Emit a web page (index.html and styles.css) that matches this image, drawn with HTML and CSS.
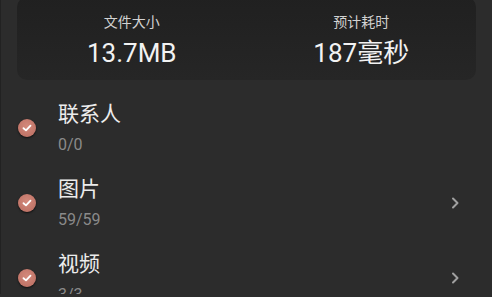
FILE: index.html
```html
<!DOCTYPE html>
<html lang="zh-CN">
<head>
    <meta charset="UTF-8">
    <meta name="viewport" content="width=device-width, initial-scale=1.0">
    <title>备份内容</title>
    <link rel="stylesheet" href="styles.css">
</head>
<body>
    <div class="page">
        <div class="summary">
            <div class="stat">
                <div class="stat-label">文件大小</div>
                <div class="stat-value">13.7MB</div>
            </div>
            <div class="stat">
                <div class="stat-label">预计耗时</div>
                <div class="stat-value">187毫秒</div>
            </div>
        </div>

        <div class="list">
            <div class="row">
                <span class="check">
                    <svg width="10" height="8" viewBox="0 0 10 8"><polyline points="1.5,4.2 4,6.4 8.5,1.6" /></svg>
                </span>
                <div class="info">
                    <div class="title">联系人</div>
                    <div class="count">0/0</div>
                </div>
            </div>
            <div class="row">
                <span class="check">
                    <svg width="10" height="8" viewBox="0 0 10 8"><polyline points="1.5,4.2 4,6.4 8.5,1.6" /></svg>
                </span>
                <div class="info">
                    <div class="title">图片</div>
                    <div class="count">59/59</div>
                </div>
                <svg class="arrow" width="10" height="12" viewBox="0 0 10 12"><polyline points="3,1.5 7.5,6 3,10.5" /></svg>
            </div>
            <div class="row">
                <span class="check">
                    <svg width="10" height="8" viewBox="0 0 10 8"><polyline points="1.5,4.2 4,6.4 8.5,1.6" /></svg>
                </span>
                <div class="info">
                    <div class="title">视频</div>
                    <div class="count">3/3</div>
                </div>
                <svg class="arrow" width="10" height="12" viewBox="0 0 10 12"><polyline points="3,1.5 7.5,6 3,10.5" /></svg>
            </div>
        </div>
    </div>
</body>
</html>
```

FILE: styles.css
```css
* {
    box-sizing: border-box;
}

body {
    margin: 0;
    background-color: #2c2c2c;
    font-family: Roboto, "Noto Sans CJK SC", sans-serif;
    overflow: hidden;
}

.page {
    height: 297px;
    border-left: 1px solid #222222;
}

.summary {
    display: grid;
    grid-template-columns: 1fr 1fr;
    margin: -3px 16px 0 16px;
    height: 83px;
    padding-top: 16px;
    background: linear-gradient(#202020, #262626);
    border-radius: 10px;
    text-align: center;
}

.stat-label {
    font-size: 14px;
    line-height: 18px;
    color: #d2d2d2;
}

.stat-value {
    margin-top: 7px;
    font-size: 26px;
    line-height: 30px;
    color: #f2f2f2;
}

.list {
    margin-top: 10px;
}

.row {
    display: flex;
    align-items: center;
    height: 75px;
    padding-left: 17px;
    padding-right: 32px;
}

.check {
    display: flex;
    align-items: center;
    justify-content: center;
    width: 18px;
    height: 18px;
    border-radius: 50%;
    background: radial-gradient(circle at 50% 40%, #d48a7c, #b86b5f);
    box-shadow: 0 1px 2px rgba(0, 0, 0, 0.7);
}

.check polyline {
    fill: none;
    stroke: #ffffff;
    stroke-width: 1.8;
    stroke-linecap: round;
    stroke-linejoin: round;
}

.info {
    flex: 1;
    margin-left: 22px;
}

.title {
    font-size: 21px;
    line-height: 27px;
    color: #ececec;
}

.count {
    margin-top: 7px;
    font-size: 16px;
    line-height: 20px;
    color: #8a8a8a;
}

.arrow polyline {
    fill: none;
    stroke: #a0a0a0;
    stroke-width: 2;
    stroke-linecap: round;
    stroke-linejoin: round;
}
```
